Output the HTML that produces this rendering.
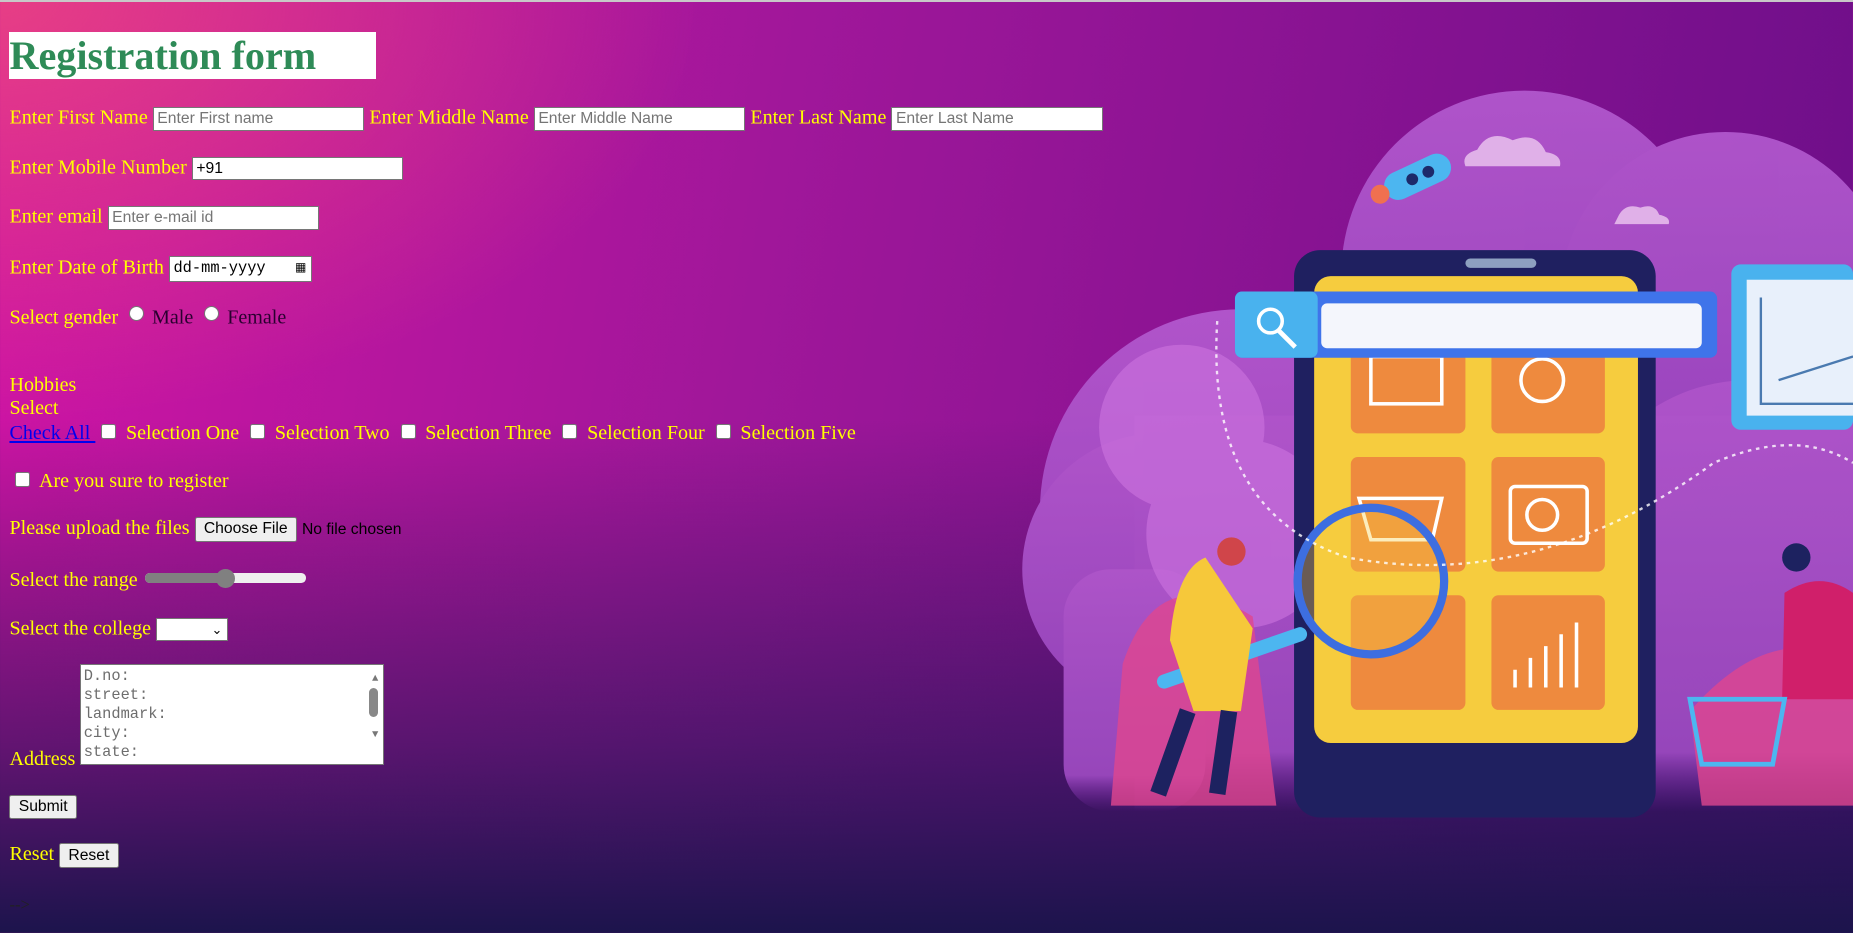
<!DOCTYPE html>
<html><head><meta charset="utf-8"><style>
html,body{margin:0;padding:0;width:1853px;height:933px;overflow:hidden}
body{background:
 radial-gradient(ellipse 700px 420px at 0px 0px, rgba(240,80,120,0.7), rgba(240,80,120,0) 100%),
 linear-gradient(180deg, rgba(0,0,0,0) 0%, rgba(0,0,0,0) 45%, rgba(30,20,80,0.6) 80%, rgba(28,20,76,1) 100%),
 linear-gradient(100deg, #d014a4 0%, #a0179a 40%, #6a0e88 100%);
 border-top:2px solid #c8c8c8;box-sizing:border-box}
#w{zoom:1.1818;position:relative;width:1568px;height:789px;font-family:"Liberation Serif",serif;font-size:17px;color:#ffff00}
.r{position:absolute;left:8px;white-space:nowrap;line-height:18px}
.in{display:inline-block;vertical-align:middle;background:#fff;border:1px solid #767676;height:20px;box-sizing:border-box;font-family:"Liberation Sans",sans-serif;font-size:13.3px;color:#757575;line-height:18px;padding-left:3px;width:179px}
.cb{display:inline-block;width:11px;height:11px;background:#fff;border:1px solid #767676;border-radius:2px;margin:0 4px 0 5px;vertical-align:0px}
.rd{display:inline-block;width:11px;height:11px;background:#fff;border:1px solid #767676;border-radius:50%;margin:0 7px 0 9px;vertical-align:2px}
.btn{display:inline-block;background:#efefef;border:1px solid #767676;border-radius:2px;font-family:"Liberation Sans",sans-serif;font-size:13.3px;color:#000;padding:1px 7px;line-height:17px;vertical-align:middle}
h1{position:absolute;left:8px;top:25px;margin:0;width:310px;height:40px;background:#fff;color:#2e8b57;font-size:34px;line-height:40px;font-family:"Liberation Serif",serif}
</style></head><body><div id="w">
<h1>Registration form</h1>
<div class="r" style="top:89px">Enter First Name <span class="in">Enter First name</span> Enter Middle Name <span class="in">Enter Middle Name</span> Enter Last Name <span class="in">Enter Last Name</span></div>
<div class="r" style="top:131px">Enter Mobile Number <span class="in" style="color:#000">+91</span></div>
<div class="r" style="top:173px">Enter email <span class="in">Enter e-mail id</span></div>
<div class="r" style="top:215px">Enter Date of Birth <span class="in" style="width:121px;color:#000;font-family:'Liberation Mono',monospace;font-size:13px;height:22px;line-height:20px">dd-mm-yyyy <span style="float:right;margin-right:4px;font-size:10px">▦</span></span></div>
<div class="r" style="top:257px">Select gender<span class="rd"></span><span style="color:#2a0030">Male</span><span class="rd"></span><span style="color:#2a0030">Female</span></div>
<div class="r" style="top:316px">Hobbies</div>
<div class="r" style="top:335px">Select</div>
<div class="r" style="top:356px"><span style="color:#0000ee;text-decoration:underline">Check All </span><span class="cb"></span> Selection One <span class="cb"></span> Selection Two <span class="cb"></span> Selection Three <span class="cb"></span> Selection Four <span class="cb"></span> Selection Five</div>
<div class="r" style="top:397px"><span class="cb" style="margin-left:5px"></span> Are you sure to register</div>
<div class="r" style="top:436px">Please upload the files <span class="btn">Choose File</span> <span style="font-family:'Liberation Sans',sans-serif;font-size:13.3px;color:#000">No file chosen</span></div>
<div class="r" style="top:481px">Select the range <span style="display:inline-block;position:relative;width:136px;height:8px;vertical-align:3px;margin-left:2px"><span style="position:absolute;left:0;top:0;width:136px;height:8px;border-radius:4px;background:#efefef"></span><span style="position:absolute;left:0;top:0;width:70px;height:8px;border-radius:4px;background:#808080"></span><span style="position:absolute;left:60px;top:-4px;width:16px;height:16px;border-radius:50%;background:#808080"></span></span></div>
<div class="r" style="top:521px">Select the college <span class="in" style="width:61px;height:20px;color:#000;font-size:11px;text-align:right;padding-right:4px">&#8964;</span></div>
<div style="position:absolute;left:68px;top:560px;width:257px;height:86px;background:#fff;border:1px solid #767676;box-sizing:border-box;font-family:'Liberation Mono',monospace;font-size:13px;line-height:16px;color:#6d6d6d;padding:2px 0 0 2px;white-space:pre">D.no:
street:
landmark:
city:
state:<span style="position:absolute;right:4px;top:4px;font-size:9px;color:#777">▲</span><span style="position:absolute;right:4px;top:20px;width:8px;height:24px;background:#888;border-radius:4px"></span><span style="position:absolute;right:4px;top:52px;font-size:9px;color:#777">▼</span></div>
<div class="r" style="top:632px">Address</div>
<div class="r" style="top:671px"><span class="btn">Submit</span></div>
<div class="r" style="top:712px">Reset <span class="btn">Reset</span></div>
<div class="r" style="top:755px;color:#222;font-size:14px">--&gt;</div>

<svg style="position:absolute;left:0;top:0" width="1568" height="789" viewBox="0 0 1568 789">
 <defs><linearGradient id="cf" x1="0" y1="0" x2="0" y2="1"><stop offset="0" stop-color="#b45bd0"/><stop offset="0.85" stop-color="#a04cc4"/><stop offset="1" stop-color="#7a2aa8" stop-opacity="0"/></linearGradient></defs>
 <g fill="url(#cf)" opacity="0.9">
  <circle cx="1290" cy="230" r="155"/>
  <circle cx="1460" cy="250" r="140"/>
  <circle cx="1050" cy="430" r="170"/>
  <circle cx="980" cy="480" r="115"/>
  <circle cx="1480" cy="470" r="150"/>
  <rect x="960" y="350" width="608" height="335"/>
  <rect x="900" y="480" width="120" height="205" rx="40"/>
 </g>
 <g fill="#cd74e0" opacity="0.6"><circle cx="1000" cy="360" r="70"/><circle cx="1050" cy="450" r="80"/></g>
 <path d="M950 560 Q980 470 1060 520 L1080 680 L940 680 Z" fill="#e0468e" opacity="0.8"/>
 <path d="M1430 600 Q1500 520 1568 560 L1568 680 L1440 680 Z" fill="#e0468e" opacity="0.8"/>
 <path d="M1250 125 q10 -18 30 -8 q20 -8 28 10 q14 2 12 12 h-80 q-4 -10 10 -14z" fill="#e0b0e8"/>
 <path d="M1370 180 q6 -10 18 -6 q12 -4 16 6 q10 2 8 8 h-46z" fill="#e0b0e8"/>
 <g transform="translate(1195,150) rotate(-25)"><rect x="-25" y="-12" width="60" height="24" rx="12" fill="#4cb6f0"/><circle cx="0" cy="0" r="5" fill="#1d2a6a"/><circle cx="15" cy="0" r="5" fill="#1d2a6a"/><circle cx="-30" cy="0" r="8" fill="#f07050"/></g>
 <rect x="1095" y="210" width="306" height="480" rx="22" fill="#1f2060"/>
 <rect x="1240" y="217" width="60" height="8" rx="4" fill="#8ea0c0"/>
 <rect x="1112" y="232" width="274" height="395" rx="14" fill="#f6cc3e"/>
 <g fill="#ee8a3e">
  <rect x="1143" y="290" width="97" height="75" rx="6"/><rect x="1262" y="290" width="96" height="75" rx="6"/>
  <rect x="1143" y="385" width="97" height="97" rx="6"/><rect x="1262" y="385" width="96" height="97" rx="6"/>
  <rect x="1143" y="502" width="97" height="97" rx="6"/><rect x="1262" y="502" width="96" height="97" rx="6"/>
 </g>
 <g fill="none" stroke="#fff" stroke-width="3"><rect x="1160" y="300" width="60" height="40"/><circle cx="1305" cy="320" r="18"/><rect x="1278" y="410" width="65" height="48" rx="4"/><circle cx="1305" cy="434" r="13"/><path d="M1282 580v-15M1295 580v-25M1308 580v-35M1321 580v-45M1334 580v-55"/><path d="M1150 420h70l-8 35h-52z"/></g>
 <rect x="1045" y="245" width="408" height="56" rx="6" fill="#3f74ea"/>
 <rect x="1045" y="245" width="70" height="56" rx="6" fill="#49b2ee"/>
 <rect x="1118" y="255" width="322" height="38" rx="5" fill="#f4f6fc"/>
 <circle cx="1075" cy="270" r="10" fill="none" stroke="#fff" stroke-width="3"/><path d="M1082 278l14 14" stroke="#fff" stroke-width="4"/>
 <circle cx="1160" cy="490" r="62" fill="#f6cc3e" fill-opacity="0.35" stroke="#3d6ee0" stroke-width="7"/>
 <path d="M1100 535 L985 575" stroke="#4cb6f0" stroke-width="12" stroke-linecap="round"/>
 <path d="M1030 270 Q1020 430 1140 470 Q1300 500 1450 390 Q1520 360 1568 390" fill="none" stroke="#fff" stroke-width="2" stroke-dasharray="3 4" opacity="0.8"/>
 <rect x="1465" y="222" width="103" height="140" rx="8" fill="#49b2ee"/>
 <rect x="1478" y="235" width="90" height="115" fill="#e8f0fb"/>
 <path d="M1490 250v90h78M1505 320l63-20" stroke="#4a7ab0" stroke-width="2" fill="none"/>
 <path d="M1020 470 q-25 10 -30 70 l20 60 h40 l10 -70z" fill="#f6c83a"/>
 <circle cx="1042" cy="465" r="12" fill="#d0454a"/>
 <path d="M1005 600 l-25 70 M1040 600 l-10 70" stroke="#1d2260" stroke-width="14"/>
 <path d="M1510 500 q30 -20 58 0 v90 h-60z" fill="#d01f6a"/>
 <circle cx="1520" cy="470" r="12" fill="#1d2260"/>
 <path d="M1430 590 h80 l-10 55 h-60z" fill="none" stroke="#4cb6f0" stroke-width="4"/>
</svg>
</div></body></html>
